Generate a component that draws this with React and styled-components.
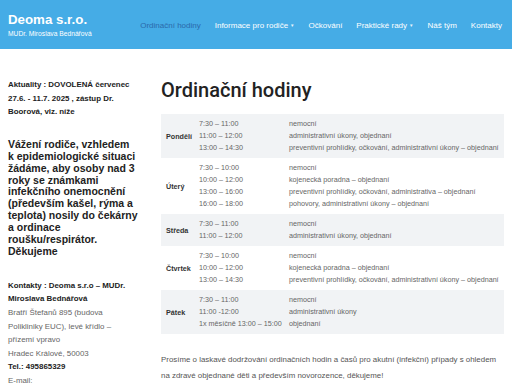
import React from "react";
import styled, { createGlobalStyle } from "styled-components";

const Global = createGlobalStyle`
  html, body { margin: 0; padding: 0; background: #fff; }
  body { font-family: "Liberation Sans", Arial, sans-serif; color: #333; overflow: hidden; }
  * { box-sizing: border-box; }
`;

const Header = styled.header`
  height: 49px;
  background: #45ace6;
  display: flex;
  align-items: center;
  justify-content: space-between;
  padding: 0 10px 0 8px;
`;

const Brand = styled.div`
  display: flex;
  flex-direction: column;
  gap: 3px;
  margin-top: 1px;
`;

const BrandName = styled.div`
  color: #fff;
  font-weight: 700;
  font-size: 13.3px;
  line-height: 15px;
`;

const BrandSub = styled.div`
  color: #fff;
  font-size: 6.7px;
  line-height: 8px;
`;

const Nav = styled.nav`
  display: flex;
  align-items: center;
  gap: 14px;
  margin-top: 1px;
`;

const NavItem = styled.a`
  font-size: 8px;
  color: ${(p) => (p.$active ? "#2b6aab" : "#fff")};
  text-decoration: none;
  white-space: nowrap;
`;

const Caret = styled.span`
  font-size: 4.5px;
  margin-left: 2px;
  vertical-align: 1px;
  color: #e6f3fc;
`;

const Main = styled.main`
  display: grid;
  grid-template-columns: 145px 1fr;
  column-gap: 8px;
  padding: 0 8px;
`;

const Sidebar = styled.aside`
  padding-top: 29px;
`;

const News = styled.p`
  margin: 0;
  font-size: 7.9px;
  line-height: 13.6px;
  font-weight: 700;
  color: #222;
  width: 134px;
`;

const Notice = styled.p`
  margin: 20px 0 0;
  font-size: 10.5px;
  line-height: 11.9px;
  font-weight: 700;
  color: #222;
  width: 134px;
`;

const Contact = styled.p`
  margin: 21px 0 0;
  font-size: 7.9px;
  line-height: 13.6px;
  color: #666;
  width: 127px;
`;

const Strong = styled.strong`
  color: #222;
  font-weight: 700;
`;

const Content = styled.section`
  padding-top: 29px;
`;

const Title = styled.h1`
  margin: 0 0 12px;
  font-family: Roboto, "Liberation Sans", Arial, sans-serif;
  font-size: 20px;
  line-height: 24px;
  font-weight: 500;
  color: #222;
`;

const Table = styled.table`
  width: 343px;
  border-collapse: collapse;
  font-size: 7.2px;
  color: #666;
`;

const Row = styled.tr`
  background: ${(p) => (p.$shade ? "#f1f3f5" : "#fff")};
`;

const Day = styled.td`
  width: 38px;
  padding: 4px 0 4px 5px;
  font-weight: 700;
  color: #333;
  vertical-align: middle;
`;

const Cell = styled.td`
  width: ${(p) => p.$w || "auto"};
  padding: 4px 0 4px 0;
  line-height: 12px;
  vertical-align: top;
  white-space: nowrap;
`;

const Line = styled.div`
  line-height: 12px;
`;

const Note = styled.p`
  margin: 18px 0 0;
  font-size: 7.9px;
  line-height: 16px;
  color: #555;
`;

const schedule = [
  {
    day: "Pondělí",
    rows: [
      ["7:30 – 11:00", "nemocní"],
      ["11:00 – 12:00", "administrativní úkony, objednaní"],
      ["13:00 – 14:30", "preventivní prohlídky, očkování, administrativní úkony – objednaní"],
    ],
  },
  {
    day: "Úterý",
    rows: [
      ["7:30 – 10:00", "nemocní"],
      ["10:00 – 12:00", "kojenecká poradna – objednaní"],
      ["13:00 – 16:00", "preventivní prohlídky, očkování, administrativa – objednaní"],
      ["16:00 – 18:00", "pohovory, administrativní úkony – objednaní"],
    ],
  },
  {
    day: "Středa",
    rows: [
      ["7:30 – 11:00", "nemocní"],
      ["11:00 – 12:00", "administrativní úkony, objednaní"],
    ],
  },
  {
    day: "Čtvrtek",
    rows: [
      ["7:30 – 10:00", "nemocní"],
      ["10:00 – 12:00", "kojenecká poradna – objednaní"],
      ["13:00 – 14:30", "preventivní prohlídky, očkování, administrativní úkony – objednaní"],
    ],
  },
  {
    day: "Pátek",
    rows: [
      ["7:30 – 11:00", "nemocní"],
      ["11:00 -12:00", "administrativní úkony"],
      ["1x měsíčně 13:00 – 15:00", "objednaní"],
    ],
  },
];

export default function App() {
  return (
    <>
      <Global />
      <Header>
        <Brand>
          <BrandName>Deoma s.r.o.</BrandName>
          <BrandSub>MUDr. Miroslava Bednářová</BrandSub>
        </Brand>
        <Nav>
          <NavItem $active>Ordinační hodiny</NavItem>
          <NavItem>
            Informace pro rodiče<Caret>▼</Caret>
          </NavItem>
          <NavItem>Očkování</NavItem>
          <NavItem>
            Praktické rady<Caret>▼</Caret>
          </NavItem>
          <NavItem>Náš tým</NavItem>
          <NavItem>Kontakty</NavItem>
        </Nav>
      </Header>
      <Main>
        <Sidebar>
          <News>
            Aktuality : DOVOLENÁ červenec 27.6. - 11.7. 2025 , zástup Dr. Boorová, viz. níže
          </News>
          <Notice>
            Vážení rodiče, vzhledem
            <br />k epidemiologické situaci žádáme, aby osoby nad 3 roky se známkami infekčního
            onemocnění (především kašel, rýma a teplota) nosily do čekárny a ordinace
            roušku/respirátor. Děkujeme
          </Notice>
          <Contact>
            <Strong>Kontakty : Deoma s.r.o – MUDr. Miroslava Bednářová</Strong>
            <br />
            Bratří Štefanů 895 (budova Polikliniky EUC), levé křídlo – přízemí vpravo
            <br />
            Hradec Králové, 50003
            <br />
            <Strong>Tel.: 495865329</Strong>
            <br />
            E-mail:
          </Contact>
        </Sidebar>
        <Content>
          <Title>Ordinační hodiny</Title>
          <Table>
            <tbody>
              {schedule.map((d, i) => (
                <Row key={d.day} $shade={i % 2 === 0}>
                  <Day>{d.day}</Day>
                  <Cell $w="90px">
                    {d.rows.map((r) => (
                      <Line key={r[0]}>{r[0]}</Line>
                    ))}
                  </Cell>
                  <Cell>
                    {d.rows.map((r) => (
                      <Line key={r[1] + r[0]}>{r[1]}</Line>
                    ))}
                  </Cell>
                </Row>
              ))}
            </tbody>
          </Table>
          <Note>
            Prosíme o laskavé dodržování ordinačních hodin a časů pro akutní (infekční) případy s
            ohledem na zdravé objednané děti a především novorozence, děkujeme!
          </Note>
        </Content>
      </Main>
    </>
  );
}
